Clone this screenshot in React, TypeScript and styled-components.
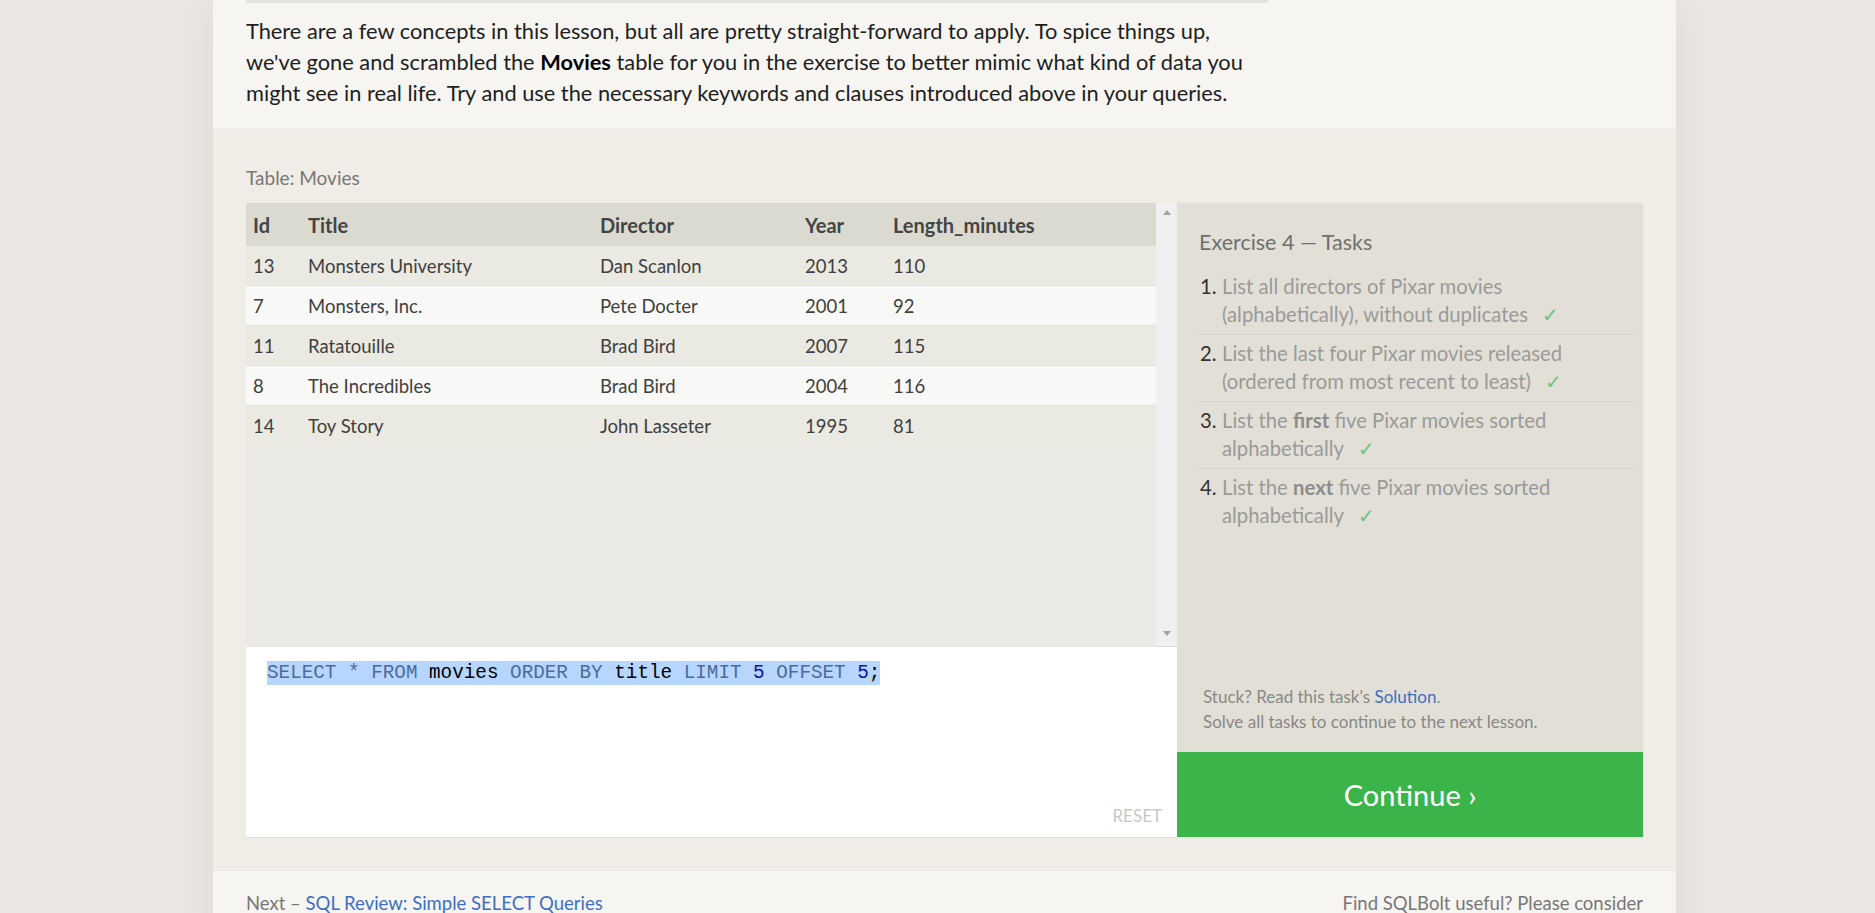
import React from 'react';
import styled, { createGlobalStyle } from 'styled-components';

type Movie = {
  id: number;
  title: string;
  director: string;
  year: number;
  length: number;
};

const movies: Movie[] = [
  { id: 13, title: 'Monsters University', director: 'Dan Scanlon', year: 2013, length: 110 },
  { id: 7, title: 'Monsters, Inc.', director: 'Pete Docter', year: 2001, length: 92 },
  { id: 11, title: 'Ratatouille', director: 'Brad Bird', year: 2007, length: 115 },
  { id: 8, title: 'The Incredibles', director: 'Brad Bird', year: 2004, length: 116 },
  { id: 14, title: 'Toy Story', director: 'John Lasseter', year: 1995, length: 81 },
];

const tasks: React.ReactNode[] = [
  <>List all directors of Pixar movies (alphabetically), without duplicates</>,
  <>List the last four Pixar movies released (ordered from most recent to least)</>,
  <>List the <b>first</b> five Pixar movies sorted alphabetically</>,
  <>List the <b>next</b> five Pixar movies sorted alphabetically</>,
];

/**
 * SQLBolt style lesson footer: exercise table, query editor and task list
 */
const App: React.FC = () => {
  return (
    <>
      <GlobalStyle />
      <Page>
        <Intro>
          <TopRule />
          <Paragraph>
            There are a few concepts in this lesson, but all are pretty straight-forward to apply. To spice things up,
            we've gone and scrambled the <b>Movies</b> table for you in the exercise to better mimic what kind of data you
            might see in real life. Try and use the necessary keywords and clauses introduced above in your queries.
          </Paragraph>
        </Intro>

        <Exercise>
          <TableLabel>Table: Movies</TableLabel>
          <Workspace>
            <LeftColumn>
              <TableArea>
                <TableScroll>
                  <Table>
                    <colgroup>
                      <col style={{ width: 55 }} />
                      <col style={{ width: 292 }} />
                      <col style={{ width: 205 }} />
                      <col style={{ width: 88 }} />
                      <col />
                    </colgroup>
                    <thead>
                      <tr>
                        <HeadCell>Id</HeadCell>
                        <HeadCell>Title</HeadCell>
                        <HeadCell>Director</HeadCell>
                        <HeadCell>Year</HeadCell>
                        <HeadCell>Length_minutes</HeadCell>
                      </tr>
                    </thead>
                    <tbody>
                      {movies.map((movie, i) => (
                        <Row key={movie.id} $even={i % 2 === 1}>
                          <Cell>{movie.id}</Cell>
                          <Cell>{movie.title}</Cell>
                          <Cell>{movie.director}</Cell>
                          <Cell>{movie.year}</Cell>
                          <Cell>{movie.length}</Cell>
                        </Row>
                      ))}
                    </tbody>
                  </Table>
                </TableScroll>
                <ScrollBar>
                  <Arrow $dir="up" />
                  <Arrow $dir="down" />
                </ScrollBar>
              </TableArea>

              <Editor>
                <CodeLine>
                  <Kw>SELECT</Kw> <Kw>*</Kw> <Kw>FROM</Kw> <Ident>movies</Ident> <Kw>ORDER</Kw> <Kw>BY</Kw>{' '}
                  <Ident>title</Ident> <Kw>LIMIT</Kw> <Num>5</Num> <Kw>OFFSET</Kw> <Num>5</Num>
                  <Ident>;</Ident>
                </CodeLine>
                <ResetButton>RESET</ResetButton>
              </Editor>
            </LeftColumn>

            <TasksColumn>
              <TasksPanel>
                <div>
                  <TasksTitle>Exercise 4 — Tasks</TasksTitle>
                  <TaskList>
                    {tasks.map((task, i) => (
                      <TaskItem key={i}>
                        <TaskNumber>{i + 1}.</TaskNumber>
                        <TaskText>
                          {task}
                          <Check>✓</Check>
                        </TaskText>
                      </TaskItem>
                    ))}
                  </TaskList>
                </div>
                <Hint>
                  Stuck? Read this task's <Link href="#">Solution</Link>.
                  <br />
                  Solve all tasks to continue to the next lesson.
                </Hint>
              </TasksPanel>
              <ContinueButton>Continue ›</ContinueButton>
            </TasksColumn>
          </Workspace>
        </Exercise>

        <Footer>
          <span>
            Next – <Link href="#">SQL Review: Simple SELECT Queries</Link>
          </span>
          <span>Find SQLBolt useful? Please consider</span>
        </Footer>
      </Page>
    </>
  );
};

// Styled components
const GlobalStyle = createGlobalStyle`
  html, body {
    margin: 0;
    padding: 0;
    background: #ebe7e3;
    font-family: Lato, "Open Sans", sans-serif;
    overflow: hidden;
  }
`;

const Page = styled.div`
  margin-left: 213px;
  width: 1463px;
  box-shadow: 0 0 40px rgba(90, 70, 50, 0.08);
`;

const Intro = styled.section`
  background: #f6f5f1;
  padding: 0 33px 20px;
`;

const TopRule = styled.div`
  width: 1022px;
  height: 3px;
  background: #e4e2dc;
`;

const Paragraph = styled.p`
  width: 1012px;
  margin: 12px 0 0;
  font-size: 21.8px;
  line-height: 31px;
  color: #1e1e1e;

  b {
    font-weight: 700;
    color: #000;
  }
`;

const Exercise = styled.section`
  background: #efede6;
  padding: 38px 33px 34px;
`;

const TableLabel = styled.div`
  font-size: 19px;
  line-height: 24px;
  color: #777;
  margin-bottom: 13px;
`;

const Workspace = styled.div`
  display: flex;
  height: 634px;
`;

const LeftColumn = styled.div`
  width: 931px;
  display: flex;
  flex-direction: column;
`;

const TableArea = styled.div`
  height: 444px;
  display: flex;
  background: #eae9e3;
`;

const TableScroll = styled.div`
  flex: 1;
  overflow: hidden;
`;

const Table = styled.table`
  width: 100%;
  border-collapse: collapse;
  table-layout: fixed;
  color: #3f3f3f;
`;

const HeadCell = styled.th`
  height: 43px;
  padding: 0 0 0 7px;
  text-align: left;
  font-size: 20px;
  font-weight: 700;
  color: #444;
  background: #dbdad0;
`;

const Row = styled.tr<{ $even: boolean }>`
  background: ${(props) => (props.$even ? '#f8f8f6' : '#eae9e2')};
  border-bottom: 1px solid #e3e2dc;

  &:last-child {
    border-bottom: none;
  }
`;

const Cell = styled.td`
  height: 39px;
  padding: 0 0 0 7px;
  font-size: 18.5px;
`;

const ScrollBar = styled.div`
  width: 21px;
  background: #f0f0f1;
  display: flex;
  flex-direction: column;
  justify-content: space-between;
  align-items: center;
  padding: 7px 0 10px;
  box-sizing: border-box;
  border-bottom: 1px solid #dcdcdc;
`;

const Arrow = styled.div<{ $dir: 'up' | 'down' }>`
  width: 0;
  height: 0;
  border-left: 4px solid transparent;
  border-right: 4px solid transparent;
  ${(props) =>
    props.$dir === 'up' ? 'border-bottom: 5px solid #a3a3a3;' : 'border-top: 5px solid #a3a3a3;'}
`;

const Editor = styled.div`
  flex: 1;
  background: #fff;
  position: relative;
  padding: 14px 21px;
  box-shadow: 0 1px 1px rgba(0, 0, 0, 0.06);
`;

const CodeLine = styled.div`
  display: inline-block;
  font-family: "Liberation Mono", "DejaVu Sans Mono", monospace;
  font-size: 19.3px;
  line-height: 24px;
  background: #b6d6fd;
  white-space: pre;
`;

const Kw = styled.span`
  color: #4d6a9c;
`;

const Ident = styled.span`
  color: #000;
`;

const Num = styled.span`
  color: #1111a8;
`;

const ResetButton = styled.span`
  position: absolute;
  right: 15px;
  bottom: 11px;
  font-size: 17px;
  color: #c8c8c8;
  cursor: pointer;
`;

const TasksColumn = styled.div`
  flex: 1;
  display: flex;
  flex-direction: column;
  box-shadow: 0 0 3px rgba(0, 0, 0, 0.04);
`;

const TasksPanel = styled.div`
  flex: 1;
  background: #e2e0d6;
  padding: 25px 10px 18px 22px;
  display: flex;
  flex-direction: column;
  justify-content: space-between;
`;

const TasksTitle = styled.div`
  font-size: 21.5px;
  line-height: 28px;
  color: #6f6f6f;
`;

const TaskList = styled.ol`
  list-style: none;
  margin: 12px 0 0;
  padding: 0;
`;

const TaskItem = styled.li`
  display: flex;
  padding: 5px 0 6px;
  border-bottom: 1px solid #d6d4ca;

  &:last-child {
    border-bottom: none;
  }
`;

const TaskNumber = styled.span`
  width: 22px;
  flex-shrink: 0;
  font-size: 20.3px;
  line-height: 27.5px;
  color: #333;
  padding-left: 1px;
`;

const TaskText = styled.span`
  flex: 1;
  font-size: 20.3px;
  line-height: 27.5px;
  color: #9a9a9a;

  b {
    font-weight: 700;
    color: #8c8c8c;
  }
`;

const Check = styled.span`
  margin-left: 14px;
  color: #72c383;
`;

const Hint = styled.div`
  font-size: 17px;
  line-height: 25px;
  color: #888;
  padding-left: 4px;
`;

const Link = styled.a`
  color: #3c6fc4;
  text-decoration: none;
`;

const ContinueButton = styled.div`
  height: 85px;
  background: #3bb54a;
  color: #fff;
  font-size: 29px;
  display: flex;
  align-items: center;
  justify-content: center;
  cursor: pointer;
`;

const Footer = styled.footer`
  background: #f6f5f1;
  padding: 20px 33px 40px;
  display: flex;
  justify-content: space-between;
  font-size: 18.5px;
  line-height: 24px;
  color: #777;
`;

export default App;
